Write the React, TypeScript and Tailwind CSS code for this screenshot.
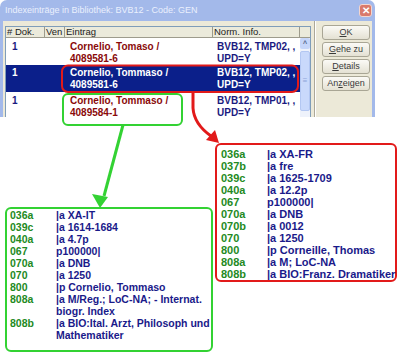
import { Fragment } from "react";

type Field = { tag: string; value: string[] };

const italianRecord: Field[] = [
  { tag: "036a", value: ["|a XA-IT"] },
  { tag: "039c", value: ["|a 1614-1684"] },
  { tag: "040a", value: ["|a 4.7p"] },
  { tag: "067", value: ["p100000|"] },
  { tag: "070a", value: ["|a DNB"] },
  { tag: "070", value: ["|a 1250"] },
  { tag: "800", value: ["|p Cornelio, Tommaso"] },
  { tag: "808a", value: ["|a M/Reg.; LoC-NA; - Internat.", "biogr. Index"] },
  { tag: "808b", value: ["|a BIO:Ital. Arzt, Philosoph und", "Mathematiker"] },
];

const frenchRecord: Field[] = [
  { tag: "036a", value: ["|a XA-FR"] },
  { tag: "037b", value: ["|a fre"] },
  { tag: "039c", value: ["|a 1625-1709"] },
  { tag: "040a", value: ["|a 12.2p"] },
  { tag: "067", value: ["p100000|"] },
  { tag: "070a", value: ["|a DNB"] },
  { tag: "070b", value: ["|a 0012"] },
  { tag: "070", value: ["|a 1250"] },
  { tag: "800", value: ["|p Corneille, Thomas"] },
  { tag: "808a", value: ["|a M; LoC-NA"] },
  { tag: "808b", value: ["|a BIO:Franz. Dramatiker"] },
];

const rows = [
  { dok: "1", entry: ["Cornelio, Tomaso /", "4089581-6"], norm: ["BVB12, TMP02, ,", "UPD=Y"], selected: false },
  { dok: "1", entry: ["Cornelio, Tommaso /", "4089581-6"], norm: ["BVB12, TMP02, ,", "UPD=Y"], selected: true },
  { dok: "1", entry: ["Cornelio, Tommaso /", "4089584-1"], norm: ["BVB12, TMP01, ,", "UPD=Y"], selected: false },
];

function FieldList({ fields, size }: { fields: Field[]; size: string }) {
  return (
    <div className={`grid grid-cols-[46px_1fr] font-bold leading-[12px] whitespace-nowrap ${size}`}>
      {fields.map((f, i) => (
        <Fragment key={i}>
          <span className="text-[#238a23]">{f.tag}</span>
          <span className="text-[#1a1a8a]">
            {f.value.map((line, j) => (
              <span key={j} className="block">
                {line}
              </span>
            ))}
          </span>
        </Fragment>
      ))}
    </div>
  );
}

function XpButton({ children }: { children: React.ReactNode }) {
  return (
    <button className="h-[15px] w-[48px] rounded-[3px] border border-[#a9a695] bg-gradient-to-b from-[#fbfaf6] to-[#e4e1d3] text-[9px] leading-[13px] text-[#3a3a3a]">
      {children}
    </button>
  );
}

function ListHeader() {
  return (
    <div className="flex h-[11px] border-b border-[#9d9b8c] bg-[#ebeadb] text-[9.5px] leading-[10px] text-[#222]">
      <div className="w-[39px] border-r border-[#9d9b8c] pl-[1px]"># Dok.</div>
      <div className="w-[20px] overflow-hidden border-r border-[#9d9b8c] pl-[1px]">Ven</div>
      <div className="w-[148px] border-r border-[#9d9b8c] pl-[1px]">Eintrag</div>
      <div className="w-[87px] border-r border-[#9d9b8c] pl-[1px]">Norm. Info.</div>
      <div className="flex-1" />
    </div>
  );
}

function Scrollbar() {
  return (
    <div className="flex w-[10px] flex-col bg-[#eef2fb]">
      <div className="flex h-[11px] items-center justify-center rounded-[2px] bg-[#c6d6fa] text-[7px] font-bold leading-none text-[#4d6185]">
        ^
      </div>
      <div className="mt-[2px] flex h-[60px] items-center justify-center rounded-[2px] border border-[#b3c7f2] bg-[#c9d9fb] text-[8px] leading-none text-[#8ea5d8]">
        ≡
      </div>
    </div>
  );
}

function IndexWindow() {
  return (
    <div className="flex h-[117px] w-[375px] flex-col overflow-hidden rounded-t-[7px] bg-[#a3b9ea] px-[3px]">
      {/* Title bar */}
      <div className="flex h-[21px] shrink-0 items-center justify-between pl-[2px]">
        <span className="text-[9px] text-[#eaf0fd]">Indexeinträge in Bibliothek: BVB12 - Code: GEN</span>
        <span className="flex h-[13px] w-[13px] items-center justify-center rounded-[3px] border border-[#f2d6d0] bg-[#d97a6c] text-[10px] font-bold leading-none text-white">
          ✕
        </span>
      </div>

      {/* Body */}
      <div className="flex flex-1 bg-[#ece9d8] pl-[2px]">
        <div className="mt-[5px] flex w-[306px] flex-col border-x border-t border-[#7f9db9] bg-white">
          <ListHeader />
          <div className="flex flex-1">
            <div className="w-[294px] text-[10px] font-bold leading-[11.5px]">
              {rows.map((r, i) => (
                <div
                  key={i}
                  className={
                    r.selected
                      ? "flex h-[27px] bg-[#0b1f8a] pt-[2px] text-white"
                      : "flex h-[27px] pt-[3px]"
                  }
                >
                  <div className={r.selected ? "w-[39px] pl-[6px]" : "w-[39px] pl-[6px] text-[#1a1a80]"}>{r.dok}</div>
                  <div className="w-[20px]" />
                  <div className={r.selected ? "w-[148px] pl-[5px]" : "w-[148px] pl-[5px] text-[#8a0a0a]"}>
                    {r.entry.map((l, j) => (
                      <div key={j}>{l}</div>
                    ))}
                  </div>
                  <div className={r.selected ? "w-[87px] pl-[4px]" : "w-[87px] pl-[4px] text-[#1a1a80]"}>
                    {r.norm.map((l, j) => (
                      <div key={j} className="whitespace-nowrap">
                        {l}
                      </div>
                    ))}
                  </div>
                </div>
              ))}
            </div>
            <Scrollbar />
          </div>
        </div>

        <div className="ml-[3px] w-[2px] border-l border-r border-l-[#aca899] border-r-white" />

        <div className="ml-[6px] mt-[4px] flex flex-col gap-[2px]">
          <XpButton>
            <u>O</u>K
          </XpButton>
          <XpButton>
            <u>G</u>ehe zu
          </XpButton>
          <XpButton>
            <u>D</u>etails
          </XpButton>
          <XpButton>
            An<u>z</u>eigen
          </XpButton>
        </div>
      </div>
    </div>
  );
}

function Annotations() {
  return (
    <svg className="pointer-events-none absolute left-0 top-0" width="400" height="354" viewBox="0 0 400 354" aria-hidden="true">
      <rect x="62" y="65.5" width="236" height="26.5" rx="6" fill="none" stroke="#e21a1a" strokeWidth="2" />
      <rect x="63" y="94" width="119" height="31" rx="5" fill="none" stroke="#33d233" strokeWidth="2" />
      <path d="M193 92 L193 108 Q194 124 211 136" fill="none" stroke="#e21a1a" strokeWidth="3" />
      <polygon points="219,143 206,140 215,130" fill="#e21a1a" />
      <path d="M123 125 L104 196" fill="none" stroke="#33d233" strokeWidth="3" />
      <polygon points="100,208 92,194 108,197" fill="#33d233" />
    </svg>
  );
}

export default function App() {
  return (
    <div className="relative h-[354px] w-[400px] overflow-hidden bg-white font-['Liberation_Sans',Arial,sans-serif]">
      <IndexWindow />

      <div className="flex items-start pl-[5px]">
        <div className="mt-[90px] w-[208px] rounded-[6px] border-2 border-[#33d233] pb-[9px] pl-[3px]">
          <FieldList fields={italianRecord} size="text-[10.5px]" />
        </div>
        <div className="ml-[2px] mt-[26px] w-[182px] rounded-[6px] border-2 border-[#e21a1a] pl-[4px] pt-[3px]">
          <FieldList fields={frenchRecord} size="text-[11px]" />
        </div>
      </div>

      <Annotations />
    </div>
  );
}
